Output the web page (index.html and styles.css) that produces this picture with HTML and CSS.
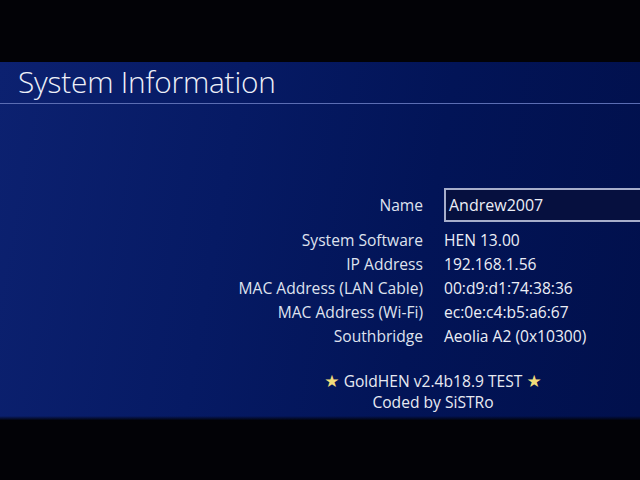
FILE: index.html
```html
<!DOCTYPE html>
<html>
<head>
<meta charset="utf-8">
<link rel="stylesheet" href="styles.css">
</head>
<body>
<div class="bar top"></div>
<main class="screen">
  <header class="head">
    <h1 class="title">System Information</h1>
  </header>
  <section class="info">
    <div class="label name-label">Name</div>
    <div class="value"><div class="namebox">Andrew2007</div></div>
    <div class="label first">System Software</div>
    <div class="value first">HEN 13.00</div>
    <div class="label">IP Address</div>
    <div class="value">192.168.1.56</div>
    <div class="label">MAC Address (LAN Cable)</div>
    <div class="value">00:d9:d1:74:38:36</div>
    <div class="label">MAC Address (Wi-Fi)</div>
    <div class="value">ec:0e:c4:b5:a6:67</div>
    <div class="label">Southbridge</div>
    <div class="value">Aeolia A2 (0x10300)</div>
  </section>
  <footer class="credits">
    <div><span class="star">★</span> GoldHEN v2.4b18.9 TEST <span class="star">★</span></div>
    <div>Coded by SiSTRo</div>
  </footer>
</main>
<div class="bar bottom"></div>
</body>
</html>
```
FILE: styles.css
```css
html, body {
  margin: 0;
  padding: 0;
  width: 640px;
  height: 480px;
  overflow: hidden;
  background: #000;
  font-family: "Open Sans", "DejaVu Sans", sans-serif;
  color: #e8eaf2;
}
.bar {
  background: #020206;
}
.bar.top { height: 62px; }
.bar.bottom { height: 60px; }
.screen {
  height: 358px;
  background: linear-gradient(100deg, #0c2170 0%, #061a64 35%, #021457 65%, #01104c 100%);
  display: flex;
  flex-direction: column;
  position: relative;
}
.screen::after {
  content: "";
  position: absolute;
  left: 0; right: 0; bottom: 0;
  height: 4px;
  background: linear-gradient(to bottom, rgba(0,0,0,0), rgba(2,2,6,0.9));
}
.head {
  height: 41px;
  border-bottom: 1px solid #5b6db3;
  padding-left: 18px;
}
.title {
  margin: 0;
  font-weight: 300;
  font-size: 29.8px;
  line-height: 40px;
  color: #eef0f8;
  letter-spacing: -0.2px;
}
.info {
  margin-top: 84px;
  display: grid;
  grid-template-columns: 423px 1fr;
  column-gap: 21px;
  font-size: 15.6px;
  line-height: 24px;
}
.label {
  text-align: right;
  color: #dfe2ee;
}
.name-label {
  line-height: 34px;
}
.value {
  color: #eceef6;
  white-space: nowrap;
}
.first {
  margin-top: 6px;
}
.namebox {
  height: 30px;
  line-height: 30px;
  border: 2px solid #a7aecb;
  border-right: none;
  background: #06103f;
  padding-left: 3px;
  font-size: 16px;
}
.credits {
  margin-top: 22px;
  padding-left: 226px;
  text-align: center;
  font-size: 15.6px;
  line-height: 21px;
  color: #e8eaf2;
}
.star {
  color: #f2dc7a;
  font-size: 17px;
}
```
